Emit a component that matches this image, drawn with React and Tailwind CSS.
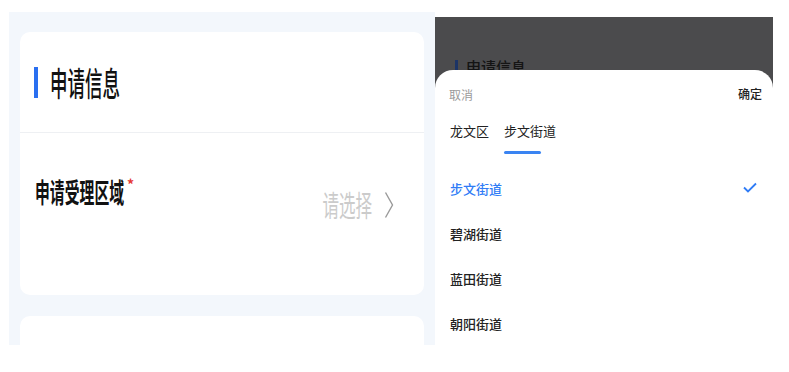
import React from "react";

const cjk = { fontFamily: '"Noto Sans CJK SC", "Noto Sans", sans-serif' };

export default function App() {
  const items = ["步文街道", "碧湖街道", "蓝田街道", "朝阳街道"];
  return (
    <div className="w-[789px] h-[372px] bg-white flex overflow-hidden" style={cjk}>
      {/* Left panel */}
      <div className="ml-[9px] mt-[12px] w-[426px] h-[333px] bg-[#f3f7fc] flex flex-col px-[11px] pt-[20px] gap-[21px] overflow-hidden">
        <div className="bg-white rounded-[10px] h-[263px] shrink-0 flex flex-col">
          <div className="h-[101px] flex items-center pl-[14px] border-b border-[#eef0f3]">
            <div className="w-[4px] h-[31px] bg-[#2a6ff0]" />
            <div className="ml-[12px] origin-left scale-x-[0.53] text-[33px] leading-none text-[#111] font-medium whitespace-nowrap">
              申请信息
            </div>
          </div>
          <div className="flex pl-[15px] pr-[30px]">
            <div className="mt-[45px] flex items-start">
              <span className="origin-left scale-x-[0.55] text-[27px] leading-none font-bold text-[#111] whitespace-nowrap inline-block w-[88px]">
                申请受理区域
              </span>
              <span className="text-[#e53935] text-[14px] leading-none ml-[4px] -mt-[1px] font-bold">*</span>
            </div>
            <div className="ml-auto mt-[57px] flex items-center">
              <span className="origin-right scale-x-[0.57] text-[29px] leading-none text-[#cbcbcb] whitespace-nowrap inline-block">
                请选择
              </span>
              <svg width="10" height="28" viewBox="0 0 10 28" className="ml-[12px]">
                <path d="M1.5 1.5 L8.5 14 L1.5 26.5" fill="none" stroke="#9a9a9a" strokeWidth="1.4" />
              </svg>
            </div>
          </div>
        </div>
        <div className="bg-white rounded-[10px] h-[60px] shrink-0" />
      </div>

      {/* Right panel */}
      <div className="mt-[17px] w-[338px] h-[328px] bg-[#4b4b4d] flex flex-col">
        <div className="h-[53px] shrink-0 overflow-hidden relative">
          <div className="absolute left-[20px] top-[42px] flex items-center gap-[8px]">
            <div className="w-[3px] h-[14px] bg-[#1c3466]" />
            <span className="text-[15px] leading-none text-[#141414] font-medium">申请信息</span>
          </div>
        </div>
        <div className="flex-1 bg-white rounded-t-[18px] flex flex-col">
          <div className="flex justify-between items-center pl-[14px] pr-[11px] pt-[17px]">
            <span className="text-[12px] leading-none text-[#9a9a9a] mt-[2px]">取消</span>
            <span className="text-[12px] leading-none text-[#222] font-medium">确定</span>
          </div>
          <div className="flex pl-[15px] mt-[23px] gap-[15px]">
            <span className="text-[13px] leading-none text-[#222]">龙文区</span>
            <div className="flex flex-col">
              <span className="text-[13px] leading-none text-[#222]">步文街道</span>
              <div className="mt-[14px] w-[37px] h-[3px] rounded-full bg-[#3a84f2]" />
            </div>
          </div>
          <div className="flex flex-col mt-[12px]">
            {items.map((t, i) => (
              <div key={t} className="h-[45px] flex items-center pl-[15px] pr-[16px]">
                <span className={`text-[13px] leading-none font-medium ${i === 0 ? "text-[#2f7cf6]" : "text-[#222]"}`}>{t}</span>
                {i === 0 && (
                  <svg width="14" height="11" viewBox="0 0 14 11" className="ml-auto -mt-[2px]">
                    <path d="M1 5.5 L5 9.5 L13 1.5" fill="none" stroke="#2f7cf6" strokeWidth="1.8" />
                  </svg>
                )}
              </div>
            ))}
          </div>
        </div>
      </div>
    </div>
  );
}
